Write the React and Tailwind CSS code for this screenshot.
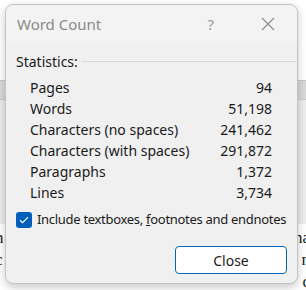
import React, { useState } from "react";

const stats = [
  ["Pages", "94"],
  ["Words", "51,198"],
  ["Characters (no spaces)", "241,462"],
  ["Characters (with spaces)", "291,872"],
  ["Paragraphs", "1,372"],
  ["Lines", "3,734"],
];

// fragments of the page text that peek out on either side of the dialog
const docLines = [
  ["n", "na"],
  ["c", "n"],
  [",", "c"],
];

export default function App() {
  const [include, setInclude] = useState(true);

  return (
    <div className="relative w-[306px] h-[290px] overflow-hidden bg-white font-['Segoe_UI','Noto_Sans',sans-serif]">
      {/* document behind the dialog */}
      <div className="flex flex-col">
        <div className="h-[80px] bg-white" />
        <div className="h-[20px] bg-[#d9d9d9] border-y border-[#c8c8c8]" />
        <div className="h-[124px] bg-[#ececec]" />
        <div className="flex flex-col pt-[3px] font-['Liberation_Serif',serif] text-[17px] leading-[22px] text-[#222]">
          {docLines.map(([left, right], i) => (
            <div key={i} className="flex justify-between -ml-[5px] -mr-[4px]">
              <span>{left}</span>
              <span>{right}</span>
            </div>
          ))}
        </div>
      </div>

      {/* dialog */}
      <div className="absolute left-[5px] top-[4px] w-[293px] h-[280px] rounded-[8px] border border-[#c4c4c4] bg-[#f0f0f0] shadow-[0_3px_8px_rgba(0,0,0,0.22)] flex flex-col">
        <div className="h-[38px] flex items-center pl-[11px] pr-[22px] rounded-t-[8px] bg-[#f3f3f3]">
          <span className="text-[15px] text-[#8a8a8a]">Word Count</span>
          <span className="ml-auto text-[15px] text-[#9a9a9a] mr-[47px]">?</span>
          <svg width="14" height="14" viewBox="0 0 14 14" className="text-[#8a8a8a]">
            <path d="M1 1L13 13M13 1L1 13" stroke="currentColor" strokeWidth="1.1" fill="none" />
          </svg>
        </div>

        <div className="flex flex-col px-[10px] pt-[8px]">
          <div className="flex items-center gap-[4px] h-[20px]">
            <span className="text-[14px] text-[#1a1a1a]">Statistics:</span>
            <div className="flex-1 h-px bg-[#d8d8d8] -mr-[10px]" />
          </div>

          <div className="flex flex-col pl-[14px] pr-[15px] pt-[6px]">
            {stats.map(([label, value]) => (
              <div key={label} className="flex items-center justify-between h-[21px] text-[14px] text-[#1a1a1a]">
                <span>{label}</span>
                <span>{value}</span>
              </div>
            ))}
          </div>

          <label className="flex items-center gap-[5px] mt-[7px] h-[20px] cursor-pointer">
            <button
              type="button"
              onClick={() => setInclude(!include)}
              className={
                include
                  ? "shrink-0 w-[16px] h-[16px] rounded-[3px] bg-[#005fb8] flex items-center justify-center"
                  : "shrink-0 w-[16px] h-[16px] rounded-[3px] border border-[#8a8a8a] bg-white"
              }
            >
              {include && (
                <svg width="10" height="8" viewBox="0 0 10 8">
                  <path d="M1 4.2L3.6 6.6L9 1.2" stroke="white" strokeWidth="1.2" fill="none" />
                </svg>
              )}
            </button>
            <span className="text-[13px] tracking-[-0.3px] text-[#1a1a1a] whitespace-nowrap">
              Include textboxes, <span className="underline">f</span>ootnotes and endnotes
            </span>
          </label>

          <div className="flex justify-end mt-[16px]">
            <button className="w-[112px] h-[28px] rounded-[4px] bg-white border border-[#0067c0] text-[14px] text-[#1a1a1a]">
              Close
            </button>
          </div>
        </div>
      </div>
    </div>
  );
}
